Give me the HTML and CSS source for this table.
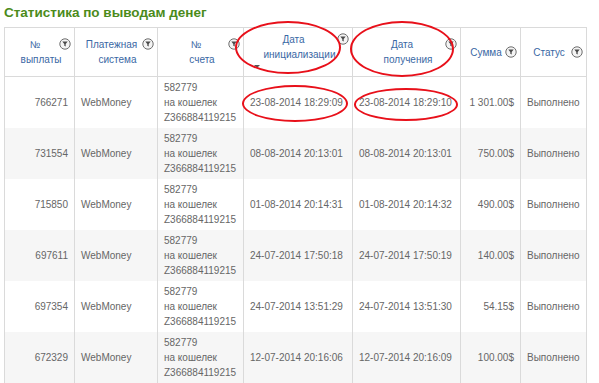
FILE: index.html
```html
<!DOCTYPE html>
<html lang="ru">
<head>
<meta charset="utf-8">
<link rel="stylesheet" href="styles.css">
</head>
<body>
<div class="page">
  <h1 class="title">Статистика по выводам денег</h1>
  <div class="table-wrap">
    <table class="stats">
      <colgroup>
        <col class="c1"><col class="c2"><col class="c3"><col class="c4"><col class="c5"><col class="c6"><col class="c7">
      </colgroup>
      <thead>
        <tr>
          <th><span class="flt"><svg viewBox="0 0 12 12" width="12" height="12"><circle cx="6" cy="6" r="5.2" fill="#f4f4f4" stroke="#6d6d6d"/><path d="M3.3 3.6h5.4L6.7 6.1v2.4L5.3 7.7V6.1z" fill="#4a4a4a"/></svg></span><span class="lbl">№<br>выплаты</span></th>
          <th><span class="flt"><svg viewBox="0 0 12 12" width="12" height="12"><circle cx="6" cy="6" r="5.2" fill="#f4f4f4" stroke="#6d6d6d"/><path d="M3.3 3.6h5.4L6.7 6.1v2.4L5.3 7.7V6.1z" fill="#4a4a4a"/></svg></span><span class="lbl">Платежная<br>система</span></th>
          <th><span class="flt"><svg viewBox="0 0 12 12" width="12" height="12"><circle cx="6" cy="6" r="5.2" fill="#f4f4f4" stroke="#6d6d6d"/><path d="M3.3 3.6h5.4L6.7 6.1v2.4L5.3 7.7V6.1z" fill="#4a4a4a"/></svg></span><span class="lbl">№<br>счета</span></th>
          <th><span class="flt"><svg viewBox="0 0 12 12" width="12" height="12"><circle cx="6" cy="6" r="5.2" fill="#f4f4f4" stroke="#6d6d6d"/><path d="M3.3 3.6h5.4L6.7 6.1v2.4L5.3 7.7V6.1z" fill="#4a4a4a"/></svg></span><span class="lbl">Дата<br>инициализации</span><span class="sort"></span></th>
          <th><span class="flt"><svg viewBox="0 0 12 12" width="12" height="12"><circle cx="6" cy="6" r="5.2" fill="#f4f4f4" stroke="#6d6d6d"/><path d="M3.3 3.6h5.4L6.7 6.1v2.4L5.3 7.7V6.1z" fill="#4a4a4a"/></svg></span><span class="lbl">Дата<br>получения</span></th>
          <th><span class="flt"><svg viewBox="0 0 12 12" width="12" height="12"><circle cx="6" cy="6" r="5.2" fill="#f4f4f4" stroke="#6d6d6d"/><path d="M3.3 3.6h5.4L6.7 6.1v2.4L5.3 7.7V6.1z" fill="#4a4a4a"/></svg></span><span class="lbl">Сумма</span></th>
          <th><span class="flt"><svg viewBox="0 0 12 12" width="12" height="12"><circle cx="6" cy="6" r="5.2" fill="#f4f4f4" stroke="#6d6d6d"/><path d="M3.3 3.6h5.4L6.7 6.1v2.4L5.3 7.7V6.1z" fill="#4a4a4a"/></svg></span><span class="lbl">Статус</span></th>
        </tr>
      </thead>
      <tbody>
        <tr>
          <td class="num">766271</td><td>WebMoney</td><td>582779<br>на кошелек<br>Z366884119215</td>
          <td>23-08-2014 18:29:09</td><td>23-08-2014 18:29:10</td><td class="num">1 301.00$</td><td>Выполнено</td>
        </tr>
        <tr class="alt">
          <td class="num">731554</td><td>WebMoney</td><td>582779<br>на кошелек<br>Z366884119215</td>
          <td>08-08-2014 20:13:01</td><td>08-08-2014 20:13:01</td><td class="num">750.00$</td><td>Выполнено</td>
        </tr>
        <tr>
          <td class="num">715850</td><td>WebMoney</td><td>582779<br>на кошелек<br>Z366884119215</td>
          <td>01-08-2014 20:14:31</td><td>01-08-2014 20:14:32</td><td class="num">490.00$</td><td>Выполнено</td>
        </tr>
        <tr class="alt">
          <td class="num">697611</td><td>WebMoney</td><td>582779<br>на кошелек<br>Z366884119215</td>
          <td>24-07-2014 17:50:18</td><td>24-07-2014 17:50:19</td><td class="num">140.00$</td><td>Выполнено</td>
        </tr>
        <tr>
          <td class="num">697354</td><td>WebMoney</td><td>582779<br>на кошелек<br>Z366884119215</td>
          <td>24-07-2014 13:51:29</td><td>24-07-2014 13:51:30</td><td class="num">54.15$</td><td>Выполнено</td>
        </tr>
        <tr class="alt">
          <td class="num">672329</td><td>WebMoney</td><td>582779<br>на кошелек<br>Z366884119215</td>
          <td>12-07-2014 20:16:06</td><td>12-07-2014 20:16:09</td><td class="num">100.00$</td><td>Выполнено</td>
        </tr>
      </tbody>
    </table>
    <span class="mark m1"></span>
    <span class="mark m2"></span>
    <span class="mark m3"></span>
    <span class="mark m4"></span>
  </div>
</div>
</body>
</html>
```
FILE: styles.css
```css
html, body {
  margin: 0;
  padding: 0;
  background: #fff;
}
.page {
  padding: 4px 0 0 4px;
  font-family: "Liberation Sans", Arial, sans-serif;
}
.title {
  margin: 0 0 6px 0;
  font-size: 13.5px;
  line-height: 17px;
  font-weight: bold;
  color: #4b8b1b;
  height: 17px;
}
.table-wrap {
  position: relative;
  width: 582px;
}
.stats {
  border-collapse: collapse;
  table-layout: fixed;
  width: 582px;
  font-size: 10px;
  color: #666;
}
.c1 { width: 70px; }
.c2 { width: 83px; }
.c3 { width: 86px; }
.c4 { width: 109px; }
.c5 { width: 108px; }
.c6 { width: 60px; }
.c7 { width: 66px; }
.stats th {
  height: 48px;
  padding: 0 3px 0 6px;
  border: 1px solid #dadada;
  font-weight: normal;
  color: #3a68a4;
  line-height: 15px;
  text-align: center;
  vertical-align: middle;
  background: #fff;
}
.flt {
  float: right;
  width: 12px;
  height: 12px;
  margin-top: 1px;
}
.flt svg { display: block; }
.lbl { display: block; }
.sort {
  display: block;
  width: 0;
  height: 0;
  margin: 3px 0 4px 4px;
  border-left: 3px solid transparent;
  border-right: 3px solid transparent;
  border-top: 3px solid #555;
}
.stats td {
  padding: 3px 6px;
  line-height: 15px;
  border-left: 1px solid #dadada;
  border-right: 1px solid #dadada;
  vertical-align: middle;
  white-space: nowrap;
  height: 45px;
}
.stats tr.alt td { background: #f6f6f6; }
.stats td.num { text-align: right; }
.mark {
  position: absolute;
  border: 2px solid #e8101a;
  border-radius: 50%;
  box-sizing: border-box;
}
.m1 { left: 231px; top: -6px; width: 106px; height: 53px; }
.m2 { left: 346px; top: -6px; width: 104px; height: 56px; }
.m3 { left: 238px; top: 58px; width: 106px; height: 37px; }
.m4 { left: 350px; top: 61px; width: 104px; height: 33px; }
```
